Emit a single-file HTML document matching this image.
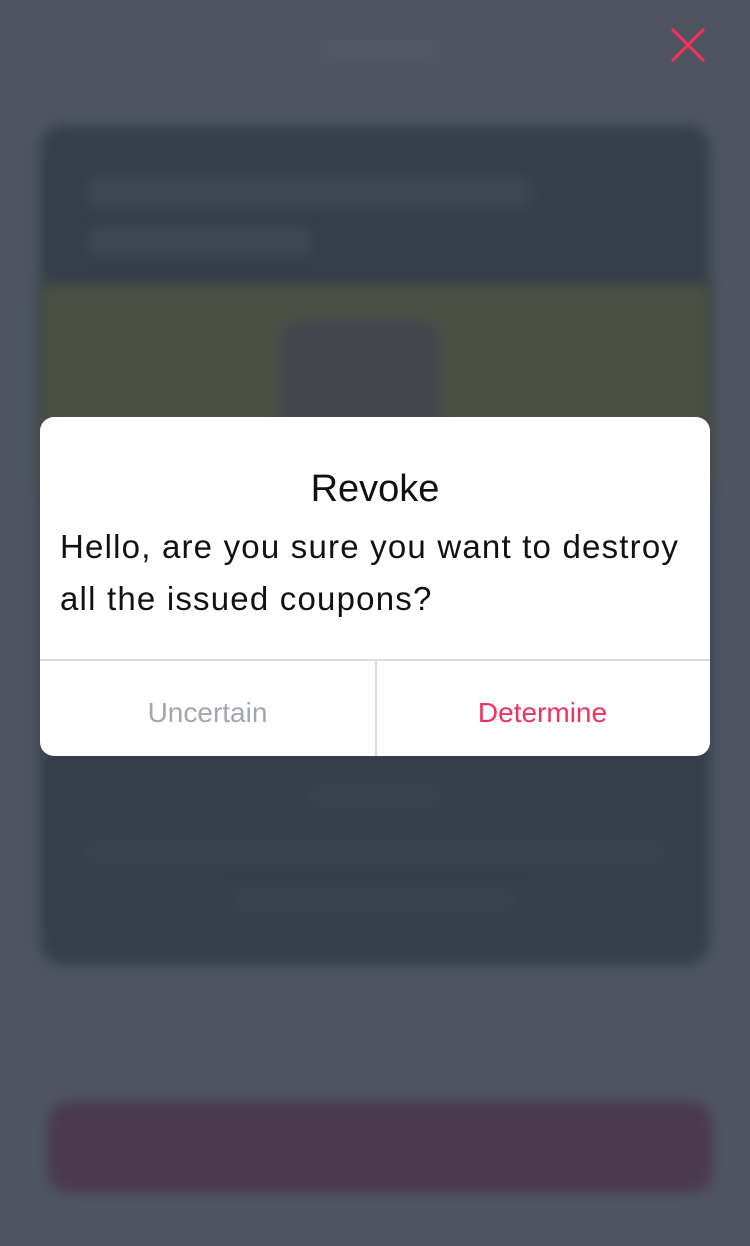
<!DOCTYPE html>
<html><head><meta charset="utf-8"><style>
*{margin:0;padding:0;box-sizing:border-box}
body{width:750px;height:1246px;overflow:hidden;background:#4e5560;font-family:"Liberation Sans",sans-serif;position:relative}
.b{position:absolute;filter:blur(6px)}
.dlg{position:absolute;left:40px;top:417px;width:670px;height:339px;background:#fff;border-radius:14px;overflow:hidden}
.t{position:absolute;top:464px;left:0;width:750px;text-align:center;font-size:38px;color:#111;line-height:50px}
.msg{position:absolute;left:60px;top:521px;width:680px;font-size:33px;line-height:52px;color:#111;letter-spacing:1.2px;white-space:nowrap}
</style></head><body>
<div class="b" style="left:40px;top:125px;width:670px;height:840px;background:#353f4a;border-radius:24px"></div>
<div class="b" style="left:40px;top:285px;width:670px;height:200px;background:#4b5145"></div>
<div class="b" style="left:280px;top:320px;width:160px;height:120px;background:#45474e;border-radius:20px"></div>
<div class="b" style="left:90px;top:178px;width:440px;height:30px;background:#3f4853;border-radius:6px"></div>
<div class="b" style="left:90px;top:228px;width:220px;height:26px;background:#3f4853;border-radius:6px"></div>
<div class="b" style="left:310px;top:785px;width:130px;height:22px;background:#3a434e;border-radius:6px"></div>
<div class="b" style="left:85px;top:840px;width:580px;height:24px;background:#3a434e;border-radius:6px"></div>
<div class="b" style="left:235px;top:888px;width:280px;height:24px;background:#3a434e;border-radius:6px"></div>
<div class="b" style="left:48px;top:1102px;width:664px;height:90px;background:#4b3a4d;border-radius:20px"></div>
<div class="b" style="left:320px;top:40px;width:120px;height:20px;background:#525965;border-radius:6px"></div>
<svg style="position:absolute;left:670px;top:27px" width="36" height="36" viewBox="0 0 36 36"><path d="M3 3L33 33M33 3L3 33" stroke="#f0325f" stroke-width="3.2" stroke-linecap="round"/></svg>
<div class="dlg">
<div style="position:absolute;left:0;top:242px;width:670px;height:2px;background:#dcdcdc"></div>
<div style="position:absolute;left:335px;top:243px;width:2px;height:96px;background:#dcdcdc"></div>
<div style="position:absolute;left:0;top:280px;width:335px;text-align:center;font-size:28px;color:#a2a5ad">Uncertain</div>
<div style="position:absolute;left:335px;top:280px;width:335px;text-align:center;font-size:28px;color:#f0325f">Determine</div>
</div>
<div class="t">Revoke</div>
<div class="msg">Hello, are you sure you want to destroy<br>all the issued coupons?</div>
</body></html>
